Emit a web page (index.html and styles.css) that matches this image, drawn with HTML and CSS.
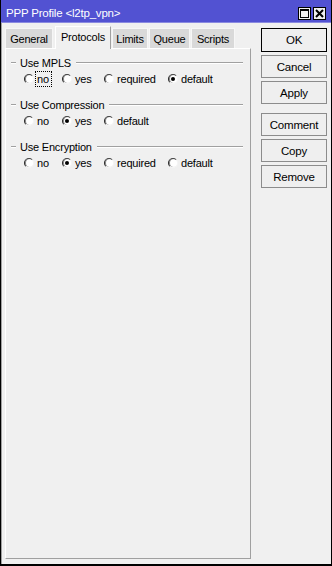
FILE: index.html
```html
<!DOCTYPE html>
<html lang="en">
<head>
    <meta charset="UTF-8">
    <title>PPP Profile &lt;l2tp_vpn&gt;</title>
    <link rel="stylesheet" href="styles.css">
</head>
<body>
    <div class="window">
        <div class="titlebar">
            <span class="title">PPP Profile &lt;l2tp_vpn&gt;</span>
            <div class="title-btns">
                <span class="tbtn">
                    <svg width="11" height="11" viewBox="0 0 11 11"><rect x="1.5" y="1.5" width="8" height="8" fill="none" stroke="#000" stroke-width="1"/><line x1="1" y1="2" x2="10" y2="2" stroke="#000" stroke-width="2"/></svg>
                </span>
                <span class="tbtn">
                    <svg width="11" height="11" viewBox="0 0 11 11"><path d="M2 2 L9 9 M9 2 L2 9" stroke="#000" stroke-width="2"/></svg>
                </span>
            </div>
        </div>

        <div class="body">
            <div class="left">
                <div class="tabs">
                    <div class="tab tab-general">General</div>
                    <div class="tab active tab-protocols">Protocols</div>
                    <div class="tab tab-limits">Limits</div>
                    <div class="tab tab-queue">Queue</div>
                    <div class="tab tab-scripts">Scripts</div>
                </div>
                <div class="panel">
                    <div class="group">
                        <div class="legend"><span>Use MPLS</span></div>
                        <div class="options">
                            <label class="opt w-no"><i class="radio"></i><span class="focus">no</span></label>
                            <label class="opt w-yes"><i class="radio"></i>yes</label>
                            <label class="opt w-req"><i class="radio"></i>required</label>
                            <label class="opt"><i class="radio on"></i>default</label>
                        </div>
                    </div>
                    <div class="group">
                        <div class="legend"><span>Use Compression</span></div>
                        <div class="options">
                            <label class="opt w-no"><i class="radio"></i>no</label>
                            <label class="opt w-yes"><i class="radio on"></i>yes</label>
                            <label class="opt"><i class="radio"></i>default</label>
                        </div>
                    </div>
                    <div class="group">
                        <div class="legend"><span>Use Encryption</span></div>
                        <div class="options">
                            <label class="opt w-no"><i class="radio"></i>no</label>
                            <label class="opt w-yes"><i class="radio on"></i>yes</label>
                            <label class="opt w-req"><i class="radio"></i>required</label>
                            <label class="opt"><i class="radio"></i>default</label>
                        </div>
                    </div>
                </div>
            </div>

            <div class="right">
                <button class="btn default">OK</button>
                <button class="btn">Cancel</button>
                <button class="btn">Apply</button>
                <button class="btn spaced">Comment</button>
                <button class="btn">Copy</button>
                <button class="btn">Remove</button>
            </div>
        </div>
    </div>
</body>
</html>
```

FILE: styles.css
```css
body {
    margin: 0;
    font-family: 'Liberation Sans', Arial, sans-serif;
    font-size: 11px;
    letter-spacing: -0.2px;
    color: #000;
    background: #f0f0f0;
}
.window {
    width: 332px;
    height: 566px;
    box-sizing: border-box;
    border: 1px solid #000;
    border-top: none;
    border-bottom-width: 2px;
    background: #f0f0f0;
    display: flex;
    flex-direction: column;
}
.titlebar {
    height: 21px;
    background: #5252d2;
    color: white;
    display: flex;
    align-items: center;
    justify-content: space-between;
    padding: 1px 5px 0 5px;
    border-bottom: 1px solid #8a8ae0;
}
.title {
    font-size: 11.5px;
    padding-top: 3px;
}
.title-btns {
    display: flex;
    gap: 2px;
    padding-top: 4px;
}
.tbtn {
    width: 13px;
    height: 13px;
    box-sizing: border-box;
    border: 1px solid #000;
    background: #f0f0f0;
    display: flex;
    align-items: center;
    justify-content: center;
}
.body {
    flex: 1;
    display: flex;
    padding: 2px 0 5px 3px;
    gap: 10px;
    border-left: 1px solid #a0a0a0;
}
.left {
    width: 246px;
    display: flex;
    flex-direction: column;
}
.tabs {
    display: flex;
    align-items: flex-end;
    height: 23px;
}
.tab {
    height: 20px;
    line-height: 20px;
    text-align: center;
    background: #d9d9d9;
    border: 1px solid #f6f6f6;
    border-bottom: none;
    box-sizing: border-box;
    margin-right: 1px;
}
.tab-general { width: 48px; margin-right: 2px; }
.tab-protocols { width: 56px; }
.tab-limits { width: 36px; }
.tab-queue { width: 41px; }
.tab-scripts { width: 44px; }
.tab.active {
    height: 23px;
    line-height: 20px;
    background: #f0f0f0;
    border: 1px solid #fff;
    border-right-color: #a0a0a0;
    border-bottom: none;
    margin-bottom: -1px;
    position: relative;
    z-index: 1;
}
.panel {
    flex: 1;
    border: 1px solid #fff;
    border-right-color: #a0a0a0;
    border-bottom-color: #a0a0a0;
    padding: 7px 7px 0 5px;
}
.group {
    margin-bottom: 11px;
}
.legend {
    height: 14px;
    display: flex;
    align-items: center;
    gap: 4px;
    margin-bottom: 1px;
}
.legend::before,
.legend::after {
    content: "";
    height: 1px;
    background: #a0a0a0;
    border-bottom: 1px solid #fff;
}
.legend::before {
    width: 5px;
}
.legend::after {
    flex: 1;
    margin-left: 1px;
}
.options {
    display: flex;
    height: 16px;
    align-items: center;
    padding-left: 13px;
}
.opt {
    display: flex;
    align-items: center;
    height: 16px;
}
.w-no { width: 38px; }
.w-yes { width: 42px; }
.w-req { width: 64px; }
.radio {
    width: 10px;
    height: 10px;
    border-radius: 50%;
    box-sizing: border-box;
    border: 1px solid #f4f4f4;
    border-left-color: #202020;
    border-top-color: #404040;
    box-shadow: inset 1px 0 0 #8a8a8a;
    background: #fff;
    margin-right: 3px;
    position: relative;
}
.radio.on::after {
    content: "";
    position: absolute;
    left: 2px;
    top: 2px;
    width: 4px;
    height: 4px;
    border-radius: 50%;
    background: #000;
}
.focus {
    outline: 1px dotted #000;
    padding: 1px 2px 1px 1px;
    margin-left: -1px;
}
.right {
    width: 66px;
    display: flex;
    flex-direction: column;
    gap: 3px;
    padding-top: 3px;
}
.btn {
    height: 23px;
    font-family: inherit;
    font-size: 11.5px;
    letter-spacing: -0.2px;
    background: #efefef;
    border: 1px solid #8c8c8c;
    padding: 0;
    color: #000;
}
.btn.default {
    height: 24px;
    border-color: #000;
}
.btn.spaced {
    margin-top: 6px;
}
```
